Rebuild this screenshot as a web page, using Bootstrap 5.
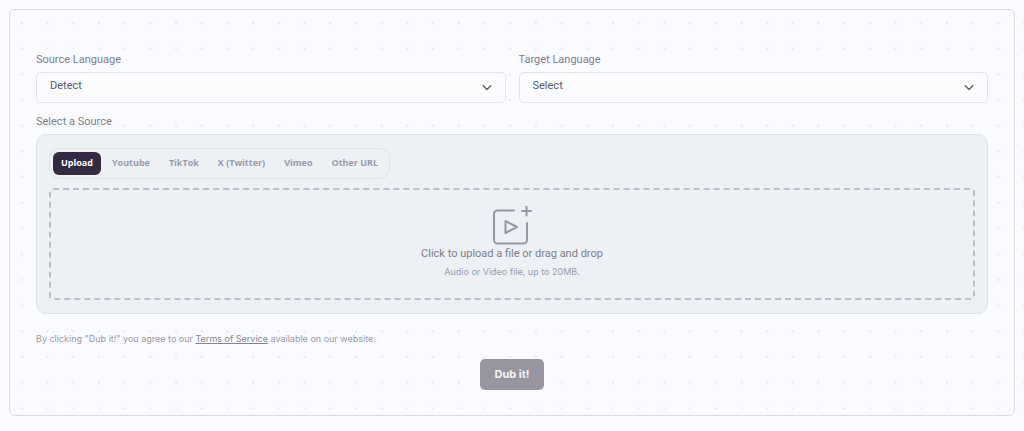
<!DOCTYPE html>
<html lang="en">
<head>
<meta charset="utf-8">
<meta name="viewport" content="width=device-width, initial-scale=1">
<title>Dub a video</title>
<link href="https://cdn.jsdelivr.net/npm/bootstrap@5.3.0/dist/css/bootstrap.min.css" rel="stylesheet">
<style>
  body {
    font-family: Roboto, "Liberation Sans", sans-serif;
    font-size: 11px;
    line-height: 16px;
    color: #7f7d8a;
    background: #fafbfe;
  }
  /* dotted canvas: ten by ten dots per tile */
  .dotted {
    background: url("data:image/svg+xml,%3Csvg xmlns='http://www.w3.org/2000/svg' viewBox='0 0 100 100'%3E%3Cpattern id='d' width='10' height='10' patternUnits='userSpaceOnUse'%3E%3Ccircle cx='5' cy='5' r='.5' fill='%23e9eaef'/%3E%3C/pattern%3E%3Crect width='100' height='100' fill='url(%23d)'/%3E%3C/svg%3E") 9px 10px / 257px 257px;
    padding: 9px 9px 15px;
    min-height: 100vh;
  }
  .dub-card { border: 1px solid #d9dae2; border-radius: 6px; padding: 42px 26px 25px; }
  .language-row { --bs-gutter-x: 13px; }
  .field-label { display: block; margin-bottom: 4px; }
  .form-select {
    height: 31px;
    padding: 0 13px 3px;
    font-size: 11px;
    line-height: 16px;
    color: #5a5960;
    border-color: #e3e4ea;
    border-radius: 5px;
    background-color: #fbfcfe;
    background-image: url("data:image/svg+xml,%3Csvg xmlns='http://www.w3.org/2000/svg' viewBox='0 0 16 16' fill='none' stroke='%2363636b' stroke-width='2' stroke-linecap='round' stroke-linejoin='round'%3E%3Cpath d='M3 5l5 5 5-5'/%3E%3C/svg%3E");
    background-size: 12px 12px;
    background-position: right 12px center;
  }
  .source-title { margin: 11px 0 4px; }
  .source-panel { background: #edf1f6; border: 1px solid #dfe4e9; border-radius: 10px; padding: 13px 12px; }
  .source-tabs { border: 1px solid #dfe3ea; border-radius: 10px; padding: 3px; margin-bottom: 9px; gap: 3px; }
  .source-tabs .nav-link {
    font-family: "Open Sans", "Liberation Sans", sans-serif;
    font-size: 9px; font-weight: 700; line-height: 13px; color: #9a9baa;
    padding: 4px 8px 6px; border: 0; border-radius: 6px; background: none;
  }
  .source-tabs .nav-link.active { color: #fff; background: #332941; }
  .drop-zone { border: 2px dashed #bcc0c7; border-radius: 4px; height: 112px; padding-top: 16px; cursor: pointer; }
  .hint, .terms, .btn-dub { font-family: "Inter", "Liberation Sans", sans-serif; font-size: 9px; }
  .hint { color: #9b9ca8; margin-top: 2px; }
  .terms { color: #9a9aa4; margin: 17px 0 12px; }
  .terms a { color: #85848e; }
  .btn-dub, .btn-dub:disabled {
    font-size: 11px; font-weight: 700; line-height: 16px; color: #f4f4f6;
    padding: 7px 14px 8px; border: 0; border-radius: 5px; background: #9894a0; opacity: 1;
  }
</style>
</head>
<body>
<main class="dotted">
  <form class="dub-card">
    <div class="row language-row">
      <div class="col-6">
        <label class="field-label" for="source">Source Language</label>
        <select class="form-select" id="source"><option>Detect</option></select>
      </div>
      <div class="col-6">
        <label class="field-label" for="target">Target Language</label>
        <select class="form-select" id="target"><option>Select</option></select>
      </div>
    </div>
    <div class="source-title" id="source-title">Select a Source</div>
    <section class="source-panel" aria-labelledby="source-title">
      <div class="source-tabs nav d-inline-flex align-top" role="tablist">
        <button type="button" class="nav-link active" role="tab" aria-selected="true">Upload</button>
        <button type="button" class="nav-link" role="tab">Youtube</button>
        <button type="button" class="nav-link" role="tab">TikTok</button>
        <button type="button" class="nav-link" role="tab">X (Twitter)</button>
        <button type="button" class="nav-link" role="tab">Vimeo</button>
        <button type="button" class="nav-link" role="tab">Other URL</button>
      </div>
      <label class="drop-zone d-flex flex-column align-items-center" for="media">
        <svg width="40" height="40" viewBox="0 0 40 40" fill="none" stroke="#9697a5" stroke-width="2" stroke-linecap="round" stroke-linejoin="round" aria-hidden="true">
          <path d="M22 4.500H5.500a3.500 3.500 0 0 0-3.500 3.500v26a3.500 3.500 0 0 0 3.500 3.500h26a3.500 3.500 0 0 0 3.500-3.500V17M34.500 .5v9M30 5h9M13.500 15v12l11.500-6z"/>
        </svg>
        <span>Click to upload a file or drag and drop</span>
        <span class="hint">Audio or Video file, up to 20MB.</span>
      </label>
      <input class="visually-hidden" type="file" id="media" accept="audio/*,video/*">
    </section>
    <p class="terms">By clicking "Dub it!" you agree to our <a href="#">Terms of Service</a> available on our website.</p>
    <div class="text-center"><button class="btn btn-dub" type="submit" disabled>Dub it!</button></div>
  </form>
</main>
<script src="https://cdn.jsdelivr.net/npm/bootstrap@5.3.0/dist/js/bootstrap.bundle.min.js"></script>
</body>
</html>
